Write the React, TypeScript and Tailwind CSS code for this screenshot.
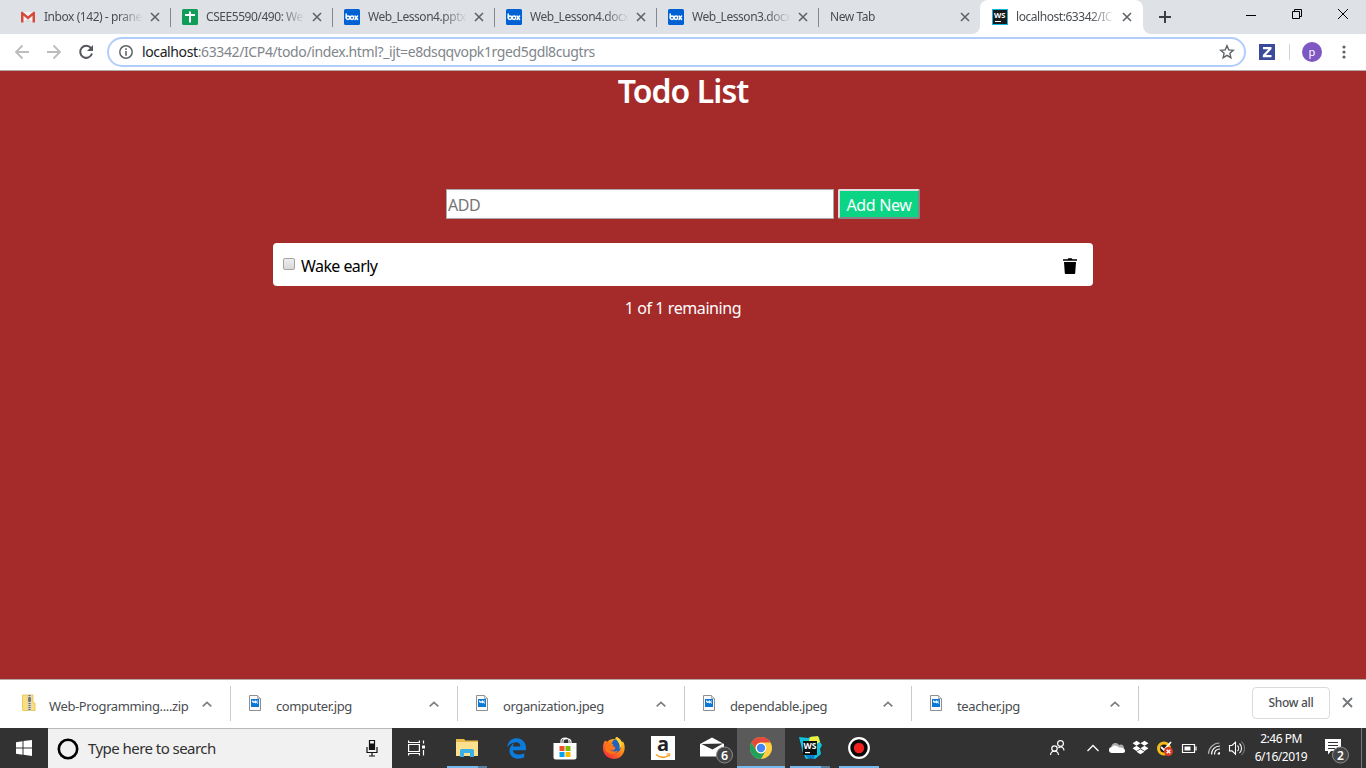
import type { ReactNode } from "react";
import { FaDropbox } from "react-icons/fa";
import { FaEdgeLegacy } from "react-icons/fa6";

/* ---------- browser tabs ---------- */

const GmailIcon = () => (
  <svg width="16" height="16" viewBox="0 0 16 16">
    <path d="M2 3h12v10H2z" fill="#f2f2f2" />
    <path d="M8 10 13 13H3z" fill="#dcdcdc" />
    <path d="M1 3.200 2.200 2.500 8 7.300l5.800-4.800L15 3.200V13.500h-2.500V6.800L8 10.500 3.500 6.800v6.700H1z" fill="#d54b3d" />
  </svg>
);

const SheetIcon = () => (
  <svg width="16" height="16" viewBox="0 0 16 16">
    <rect width="16" height="16" rx="1.5" fill="#0f9d58" />
    <path d="M7 2.500h2V5h4v2H9v6.500H7V7H3V5h4z" fill="#fff" />
  </svg>
);

const BoxIcon = () => (
  <svg width="16" height="16" viewBox="0 0 16 16">
    <rect width="16" height="16" rx="1.5" fill="#0061d5" />
    <g fill="none" stroke="#fff" strokeWidth="1.5">
      <path d="M2.200 5V9" strokeLinecap="round" />
      <circle cx="4" cy="8.700" r="1.700" />
      <circle cx="8" cy="8.700" r="1.700" />
      <path d="m11 7 2.600 3.500M13.600 7 11 10.500" strokeLinecap="round" />
    </g>
  </svg>
);

const WebStormFavicon = () => (
  <svg width="16" height="16" viewBox="0 0 16 16">
    <rect width="16" height="16" fill="#12b5dc" />
    <rect x="1" y="1" width="14" height="14" fill="#1a1a1a" />
    <text x="7.800" y="8.800" textAnchor="middle" fontSize="7.500" fontWeight="700" fill="#fff">
      WS
    </text>
    <path d="M3 12h6v1H3z" fill="#fff" />
  </svg>
);

const CloseGlyph = ({ color = "#5f6368", size = 8 }: { color?: string; size?: number }) => (
  <svg width={size} height={size} viewBox="0 0 8 8" overflow="visible">
    <path d="m0 0 8 8M8 0 0 8" stroke={color} strokeWidth="1.600" />
  </svg>
);

type TabInfo = { title: string; icon?: ReactNode; active?: boolean; divider?: boolean };

const tabs: TabInfo[] = [
  { title: "Inbox (142) - prane", icon: <GmailIcon />, divider: true },
  { title: "CSEE5590/490: We", icon: <SheetIcon />, divider: true },
  { title: "Web_Lesson4.pptx", icon: <BoxIcon />, divider: true },
  { title: "Web_Lesson4.docx", icon: <BoxIcon />, divider: true },
  { title: "Web_Lesson3.docx", icon: <BoxIcon />, divider: true },
  { title: "New Tab" },
  { title: "localhost:63342/IC", icon: <WebStormFavicon />, active: true },
];

const Tab = ({ title, icon, active, divider }: TabInfo) => (
  <div
    className={`relative flex h-full shrink-0 items-center pl-3 ${active ? "w-[163px] rounded-t-lg bg-white" : "w-[162px]"}`}
  >
    {icon && <span className="mr-2 w-4">{icon}</span>}
    <span
      className={`overflow-hidden whitespace-nowrap text-[12px] leading-4 tracking-[-0.45px] text-[#4a4d51] [mask-image:linear-gradient(to_right,black_calc(100%-26px),transparent_calc(100%-1px))] ${icon ? "w-[100px]" : "w-[124px]"}`}
    >
      {title}
    </span>
    <span className="ml-[7px]">
      <CloseGlyph />
    </span>
    {divider && <span className="absolute right-[-1px] top-[8px] h-[19px] w-px bg-[#85888c]" />}
    {active && (
      <>
        <svg className="absolute bottom-0 left-[-8px]" width="8" height="8">
          <path d="M8 0v8H0a8 8 0 0 0 8-8" fill="#fff" />
        </svg>
        <svg className="absolute bottom-0 right-[-8px]" width="8" height="8">
          <path d="M0 0v8h8a8 8 0 0 1-8-8" fill="#fff" />
        </svg>
      </>
    )}
  </div>
);

const TabStrip = () => (
  <div className="flex h-[34px] shrink-0 items-center bg-[#dee1e6] pl-2">
    {tabs.map((t, i) => (
      <Tab key={i} {...t} />
    ))}
    <svg className="ml-4" width="12" height="12" viewBox="0 0 12 12">
      <path d="M6 0v12M0 6h12" stroke="#3c4043" strokeWidth="2" />
    </svg>
    <svg className="mb-[6px] ml-auto mr-[10px]" width="120" height="12" viewBox="0 0 120 12" fill="none" stroke="#000">
      <path d="M10 7.500h10M56.500 3.500h7v7h-7zM58.500 3.500v-2h7v7h-2M102 1l10 10M112 1l-10 10" />
    </svg>
  </div>
);

const Toolbar = () => (
  <div className="flex h-9 shrink-0 items-center bg-white pl-[15px]">
    <svg width="80" height="16" viewBox="0 0 80 16" fill="none" strokeWidth="1.800">
      <path d="M14 8H1.500M7.500 1.500 1 8l6.500 6.500M32 8h12.500M38.500 1.500 45 8l-6.500 6.500" stroke="#babcbe" />
      <path d="M76 4.200A6 6 0 1 0 77 9.500" stroke="#54585d" strokeWidth="2" />
      <path d="M78 1v6h-6z" fill="#54585d" />
    </svg>
    <div className="ml-3 flex h-[30px] w-[1139px] items-center rounded-full border-2 border-[#b3cdfb] pl-[10px]">
      <svg width="14" height="14" viewBox="0 0 14 14">
        <circle cx="7" cy="7" r="6.200" fill="none" stroke="#5f6368" strokeWidth="1.500" />
        <path d="M6.200 3.300h1.600v1.600H6.200zM6.200 6h1.600v4.800H6.200z" fill="#5f6368" />
      </svg>
      <span className="ml-[9px] whitespace-nowrap text-[14px] leading-5 tracking-[-0.385px] text-[#80868b]">
        <span className="text-[#202124]">localhost</span>:63342/ICP4/todo/index.html?_ijt=e8dsqqvopk1rged5gdl8cugtrs
      </span>
      <svg className="ml-auto mr-[9px]" width="16" height="16" viewBox="0 0 16 16">
        <path
          d="m8 1.800 1.800 4.100 4.500.4-3.400 3 1 4.400L8 11.400l-3.900 2.300 1-4.400-3.400-3 4.500-.4z"
          fill="none"
          stroke="#5f6368"
          strokeWidth="1.400"
        />
      </svg>
    </div>
    <svg className="ml-[13px]" width="16" height="16" viewBox="0 0 16 16">
      <path d="M0 0h16v16H0z" fill="#3c4a9b" />
      <path d="M4 3h8.500v2L7 11h5.500v2.200H3.800V11L9.300 5.200H4z" fill="#fff" />
    </svg>
    <span className="ml-[14px] h-4 w-px bg-[#cfd1d4]" />
    <span className="ml-3 flex h-5 w-5 items-center justify-center rounded-full bg-[#7e57c2] pb-[2px] text-[11px] leading-none text-white">
      p
    </span>
    <svg className="ml-[20px]" width="4" height="14" viewBox="0 0 4 14" fill="#5f6368">
      <circle cx="2" cy="2" r="1.600" />
      <circle cx="2" cy="7" r="1.600" />
      <circle cx="2" cy="12" r="1.600" />
    </svg>
  </div>
);

/* ---------- todo page ---------- */

const TodoPage = () => (
  <main className="flex h-[610px] shrink-0 flex-col items-center border-y border-y-[#b6a9a9] bg-[#a52a2a] text-[16px] leading-6">
    <h1 className="whitespace-nowrap text-[32px] font-semibold leading-[40px] tracking-[-0.95px] text-white">Todo List</h1>
    <div className="mt-[78px] flex gap-1">
      <div className="flex h-[30px] w-[388px] items-center border border-[#a9a9a9] bg-white pl-[1px] pt-[1px] tracking-[-0.4px] text-[#757575]">
        ADD
      </div>
      <button className="h-[30px] w-[82px] whitespace-nowrap rounded-[2px] border-2 border-b-[#858585] border-l-[#dedede] border-r-[#858585] border-t-[#dedede] bg-[#0bd585] pt-[2px] leading-none tracking-[-0.35px] text-white">
        Add New
      </button>
    </div>
    <div className="mt-6 flex h-[43px] w-[820px] items-center rounded bg-white pl-[10px] pr-4 text-black">
      <span className="mb-[2px] h-[12px] w-[12px] rounded-[2px] border border-[#a3a3a3] bg-gradient-to-b from-[#ededed] to-[#d9d9d9]" />
      <span className="ml-[6px] mt-[3px] tracking-[-0.57px]">Wake early</span>
      <svg className="ml-auto mt-[2px]" width="14" height="16" viewBox="0 0 14 16">
        <path d="M0 1.200h4.500L5.300.2h3.400l.8 1H14v1.600H0zM1 4h12l-.8 11.200a.9.9 0 0 1-.8.8H2.600a.9.9 0 0 1-.8-.8z" />
      </svg>
    </div>
    <p className="mt-[10px] whitespace-nowrap tracking-[-0.42px] text-white">1 of 1 remaining</p>
  </main>
);

/* ---------- download shelf ---------- */

const ZipIcon = () => (
  <svg width="14" height="18" viewBox="0 0 14 18">
    <path d="M.500 1h10.500v8h2v7.500H.500z" fill="#fbdf7c" stroke="#e6bf45" strokeWidth=".8" />
    <path d="M5.500 1h4v15.500h-4z" fill="#d4d3cb" />
    <path d="M7.500 1v15" stroke="#66665f" strokeWidth="2" strokeDasharray="1 1" />
    <path d="M6 4h3v3H6z" fill="#777" />
  </svg>
);

const ImageIcon = () => (
  <svg width="12" height="16" viewBox="0 0 12 16">
    <path d="M.5.500h8l3 3v12H.5z" fill="#fafafa" stroke="#8f8f8f" />
    <path d="M8.500.500v3h3" fill="#ddd" stroke="#9c9c9c" strokeWidth=".8" />
    <path d="M2 4h8v8H2z" fill="#0a78d4" />
    <path d="M3 5.500h1l1 1.200 1-1.200h1l2 2.500v-1l-1-1.500h1v3.500L7.500 7.500l-1 1-1-1L4.500 8 3 7z" fill="#fff" />
  </svg>
);

const files = [
  { name: "Web-Programming....zip", icon: <ZipIcon /> },
  { name: "computer.jpg", icon: <ImageIcon /> },
  { name: "organization.jpeg", icon: <ImageIcon /> },
  { name: "dependable.jpeg", icon: <ImageIcon /> },
  { name: "teacher.jpg", icon: <ImageIcon /> },
];

const DownloadShelf = () => (
  <div className="flex h-12 shrink-0 bg-white pl-1">
    {files.map(({ name, icon }) => (
      <div key={name} className="mt-[6px] flex h-[35px] w-[227px] items-center border-r border-[#c9cacc] pl-[18px] pr-[18px]">
        <span className="mb-[2px] w-[27px]">{icon}</span>
        <span className="mt-[5px] whitespace-nowrap text-[13px] leading-4 tracking-[-0.38px] text-[#4a4d51]">{name}</span>
        <svg className="ml-auto" width="10" height="6" viewBox="0 0 10 6">
          <path d="m.7 5.300 4.300-4 4.300 4" fill="none" stroke="#7b7e82" strokeWidth="1.700" />
        </svg>
      </div>
    ))}
    <div className="ml-[113px] mt-[7px] flex h-8 w-[78px] items-center justify-center whitespace-nowrap rounded border border-[#d9dbde] text-[12px] font-medium tracking-[-0.3px] text-[#4b4e53]">
      Show all
    </div>
    <span className="ml-[13px] mt-[18px]">
      <CloseGlyph size={9} color="#74777b" />
    </span>
  </div>
);

/* ---------- taskbar ---------- */

const ExplorerIcon = () => (
  <svg width="22" height="18" viewBox="0 0 22 18">
    <path d="M0 0h8l1.500 1.500H22V17H0z" fill="#e8ba4c" />
    <path d="M0 3h22v14H0z" fill="#fde08d" />
    <path d="M4 18V11.500A1.500 1.500 0 0 1 5.500 10h11a1.500 1.500 0 0 1 1.500 1.500V18h-4v-4H8v4z" fill="#3bb0e6" />
  </svg>
);

const StoreIcon = () => (
  <svg width="24" height="23" viewBox="0 0 24 23">
    <path d="M8 6V4c0-4 8-4 8 0v2M10 6V4.500C10 1 18 .5 18 5v1" fill="none" stroke="#fff" strokeWidth="1.200" />
    <path d="M.5 6h23v14.500a2 2 0 0 1-2 2h-19a2 2 0 0 1-2-2z" fill="#fff" />
    <path d="M6.500 9h5v5h-5z" fill="#f25022" />
    <path d="M12.500 9h5v5h-5z" fill="#7fba00" />
    <path d="M6.500 15h5v5h-5z" fill="#00a4ef" />
    <path d="M12.500 15h5v5h-5z" fill="#ffb900" />
  </svg>
);

const FirefoxIcon = () => (
  <svg width="24" height="24" viewBox="0 0 24 24">
    <defs>
      <linearGradient id="fx" x1="1" y1="0" x2="0.200" y2="1">
        <stop offset="0" stopColor="#ffe226" />
        <stop offset=".45" stopColor="#ff9116" />
        <stop offset="1" stopColor="#f5243e" />
      </linearGradient>
    </defs>
    <path d="M3 4.500 5 6c2-2.500 5-3.500 8-3l1-2c4 1 5 4 6 5l1-.5c2 3 2.300 8 .5 11.500A11 11 0 0 1 1 14C.5 10 1.300 7 3 4.500z" fill="url(#fx)" />
    <path d="M12 3.500c3.500-.5 6.500 2 7 6 .3 3-1.500 7-6 7.500-3 .2-5-1.500-5.500-3l4 .5 2-2-2.500-1H8.500l3-2.500-2-2z" fill="#2363bd" />
    <path d="m4 5 3 2 3 .3-1 2.200 3 1 1.500 1L11 13l-3 .2c1 2.600 5 3 8 1-2 5-11 5-13-1z" fill="#ff7519" />
    <path d="M14 1c0 4 5 6 3.500 12 2-2 3-5 1.500-8-1-2-3-3.500-5-4z" fill="#ffd83a" />
  </svg>
);

const AmazonIcon = () => (
  <span className="flex h-6 w-6 flex-col items-center bg-white">
    <span className="mt-[1px] h-[15px] font-['Open_Sans','Noto_Sans',sans-serif] text-[20px] font-bold leading-[13px] text-[#222]">
      a
    </span>
    <svg className="mt-[1px]" width="16" height="6" viewBox="0 0 16 6">
      <path d="M1 1.500c4 3.500 9 3.500 13 .5" fill="none" stroke="#f79a1c" strokeWidth="1.500" />
      <path d="m11.500 1 3.500-.2-1 3" fill="none" stroke="#f79a1c" />
    </svg>
  </span>
);

const MailIcon = () => (
  <svg width="34" height="27" viewBox="0 0 34 27">
    <path d="M1 7 13 .5 25 7v12.500H1z" fill="#fff" />
    <path d="m2.500 7 21.500-.5L13.500 12.500z" fill="#323232" />
    <circle cx="25.500" cy="18" r="8" fill="#444" stroke="#8c8c8c" />
    <text x="25.500" y="22.500" textAnchor="middle" fontSize="12.500" fontWeight="600" fill="#fff">
      6
    </text>
  </svg>
);

const ChromeIcon = () => (
  <svg width="22" height="22" viewBox="0 0 22 22">
    <circle cx="11" cy="11" r="11" fill="#ffcf40" />
    <path d="M11 0a11 11 0 0 1 9.530 5.500H11a5.500 5.500 0 0 0-4.760 8.250L1.470 5.500A11 11 0 0 1 11 0z" fill="#e34a3c" />
    <path d="M1.470 5.500 6.240 13.750A5.500 5.500 0 0 0 15.760 13.750L11 22A11 11 0 0 1 1.470 5.500z" fill="#1fa15d" />
    <circle cx="11" cy="11" r="5.300" fill="#fff" />
    <circle cx="11" cy="11" r="4.200" fill="#4285f4" />
  </svg>
);

const WebStormIcon = () => (
  <svg width="24" height="24" viewBox="0 0 24 24">
    <path d="m1 1 9 1 4-1.500 7 .5 1 5 2 3-2 4 1 5-6 5-4-1-5 1-3-6z" fill="#0fc3dc" />
    <path d="m12 1 8-1 2 6-4 2-7-3z" fill="#f2ee3c" />
    <path d="m4 15 6 7 6 1 1-5z" fill="#0b7fd0" />
    <path d="M5 5h14v14H5z" fill="#101010" />
    <text x="12" y="13" textAnchor="middle" fontSize="8.500" fontWeight="700" fill="#fff">
      WS
    </text>
    <path d="M7 16h5v1.200H7z" fill="#fff" />
  </svg>
);

const RecordIcon = () => (
  <svg width="22" height="22" viewBox="0 0 22 22">
    <circle cx="11" cy="11" r="9.800" fill="#090909" stroke="#fff" strokeWidth="2.200" />
    <circle cx="11" cy="11" r="5.200" fill="#ee2020" />
  </svg>
);

const apps: { icon: ReactNode; mark?: "open" | "stacked" | "focus" }[] = [
  { icon: <ExplorerIcon />, mark: "stacked" },
  { icon: <FaEdgeLegacy size={21} color="#0b7bdc" /> },
  { icon: <StoreIcon /> },
  { icon: <FirefoxIcon /> },
  { icon: <AmazonIcon /> },
  { icon: <span className="ml-[7px] mt-[4px]"><MailIcon /></span> },
  { icon: <ChromeIcon />, mark: "focus" },
  { icon: <WebStormIcon />, mark: "stacked" },
  { icon: <RecordIcon />, mark: "open" },
];

const TrayIcons = () => (
  <svg className="mr-[6px]" width="202" height="20" viewBox="1046 738 202 20" fill="none" stroke="#fff">
    {/* people */}
    <g strokeWidth="1.200">
      <circle cx="1054.500" cy="748.500" r="2.700" />
      <path d="M1050.500 755c.3-5 7.700-5 8 0" />
      <circle cx="1060.500" cy="743.500" r="2.900" />
      <path d="M1058.500 748c2.300-2.500 5.500-.5 5.500 2.500" />
    </g>
    <path d="m1087.500 751 5.500-5.500 5.500 5.500" strokeWidth="1.300" />
    {/* cloud */}
    <g stroke="none">
      <path d="M1111 748c0-5 5.500-6.500 8-3 3-1.500 5 .5 5 3l1 4h-14z" fill="#aaa" />
      <path d="M1112 753a3 3 0 0 1 0-6c2-2.500 5-1.500 7 .5 3-.5 6 1 6 3.500 0 1-1 2-2 2z" fill="#fff" />
    </g>
    {/* antivirus */}
    <g>
      <circle cx="1164" cy="748.500" r="5.500" fill="#1b1b1b" stroke="#f6bc1b" strokeWidth="3" />
      <path d="m1161 747 3 3 7-8" stroke="#fff" strokeWidth="1.800" />
      <circle cx="1168.500" cy="751.500" r="4.500" fill="#db3a20" stroke="none" />
      <path d="m1166.700 749.700 3.600 3.600m0-3.600-3.600 3.600" strokeWidth="1.400" />
    </g>
    {/* battery */}
    <path d="M1182.500 744.500h12v8h-12zM1196 746.500v4" strokeWidth="1.200" />
    <path d="M1184.500 746.500h6v4h-6z" fill="#fff" stroke="none" />
    {/* wifi */}
    <g strokeWidth="1.200">
      <path d="M1208.500 754c0-6 5-11 11-11" stroke="#aaa" />
      <path d="M1211.500 754.500c0-5 3.500-8.500 8.500-8.500M1214.500 754.500c0-3.300 2.200-5.500 5.500-5.500" />
      <path d="M1217.500 754.500c0-1.500 1-2.500 2.500-2.500v2.500z" fill="#fff" stroke="none" />
    </g>
    {/* volume */}
    <path d="M1229.500 745.500h2.500l3.500-3.300v12l-3.500-3.300h-2.500zM1237.500 745.500c1.500 1.500 1.500 4 0 5.500M1239.500 743.500c2.700 2.500 2.700 7 0 9.500" strokeWidth="1.100" />
    <path d="M1241.500 741.500c4 4 4 9.500 0 13.500" stroke="#888" />
    <FaDropbox x={1132.500} y={739.500} width={17} height={17} fill="#fff" stroke="none" />
  </svg>
);

const Taskbar = () => (
  <div className="flex h-10 shrink-0 bg-[#323232] text-white">
    <div className="flex w-12 items-center pl-4">
      <svg width="16" height="16" viewBox="0 0 16 16" fill="#fff">
        <path d="m0 2.200 6.500-.9v6.200H0zM7.500 1.100 16 0v7.500H7.500zM0 8.500h6.500v6.200L0 13.800zM7.500 8.500H16V16l-8.500-1.200z" />
      </svg>
    </div>
    <div className="flex w-[344px] items-center border-t border-[#b9b9b9] bg-[#f1f1f1] pl-[9px] pr-[14px]">
      <svg width="22" height="22" viewBox="0 0 22 22">
        <circle cx="11" cy="11" r="9.200" fill="none" stroke="#000" strokeWidth="2.600" />
      </svg>
      <span className="mb-[2px] ml-[9px] whitespace-nowrap text-[15px] leading-5 tracking-[-0.55px] text-[#303030]">
        Type here to search
      </span>
      <svg className="ml-auto" width="12" height="17" viewBox="0 0 12 17" fill="none" stroke="#111">
        <path d="M3.500.500h5v9h-5z" strokeWidth="1.200" />
        <path d="M3.500 4h5v5.500h-5z" fill="#111" />
        <path d="M1 7v5.500h10V7M6 12.500V16M3 16h6" strokeWidth="1.200" />
      </svg>
    </div>
    <div className="flex w-[51px] items-center pl-4">
      <svg width="17" height="16" viewBox="0 0 17 16" fill="none" stroke="#fff" strokeWidth="1.200">
        <path d="M.600.500v2h10.800v-2M.600 15.500v-2h10.800v2M.600 4.500h10.800v7H.600zM15.500.500v3M15.500 10v5.500" />
        <path d="M14 5.500h3V8.500h-3z" fill="#fff" stroke="none" />
      </svg>
    </div>
    <div className="flex gap-px">
      {apps.map(({ icon, mark }, i) => (
        <div key={i} className={`flex w-12 flex-col items-center ${mark === "focus" ? "bg-[#5a5a5a]" : ""}`}>
          <div className="flex h-[38px] items-center pt-[2px]">{icon}</div>
          {mark === "focus" && <div className="h-[2px] w-full bg-[#76b9ed]" />}
          {mark === "open" && <div className="h-[2px] w-10 bg-[#76b9ed]" />}
          {mark === "stacked" && (
            <div className="flex h-[2px] w-10">
              <div className="w-[31px] bg-[#76b9ed]" />
              <div className="w-[9px] bg-[#567f9f]" />
            </div>
          )}
        </div>
      ))}
    </div>
    <div className="ml-auto flex items-center">
      <TrayIcons />
      <div className="flex w-[54px] flex-col items-center whitespace-nowrap text-[12px] leading-[18px] tracking-[-0.5px]">
        <span>2:46 PM</span>
        <span>6/16/2019</span>
      </div>
      <svg className="ml-4 mt-[6px]" width="26" height="27" viewBox="0 0 26 27">
        <path d="M1 1h16v12H7l-3 3.500V13H1z" fill="#fff" />
        <path d="M4 4.500h10M4 7.500h10M4 10.500h7" stroke="#333" />
        <circle cx="16.500" cy="17" r="8" fill="#444" stroke="#8c8c8c" />
        <text x="16.500" y="21.500" textAnchor="middle" fontSize="12" fontWeight="600" fill="#fff">
          2
        </text>
      </svg>
      <span className="ml-[11px] mr-1 h-10 w-px bg-[#777]" />
    </div>
  </div>
);

export default function App() {
  return (
    <div className="flex h-[768px] w-[1366px] flex-col overflow-hidden bg-white font-['Noto_Sans','Open_Sans',sans-serif]">
      <TabStrip />
      <Toolbar />
      <TodoPage />
      <DownloadShelf />
      <Taskbar />
    </div>
  );
}
